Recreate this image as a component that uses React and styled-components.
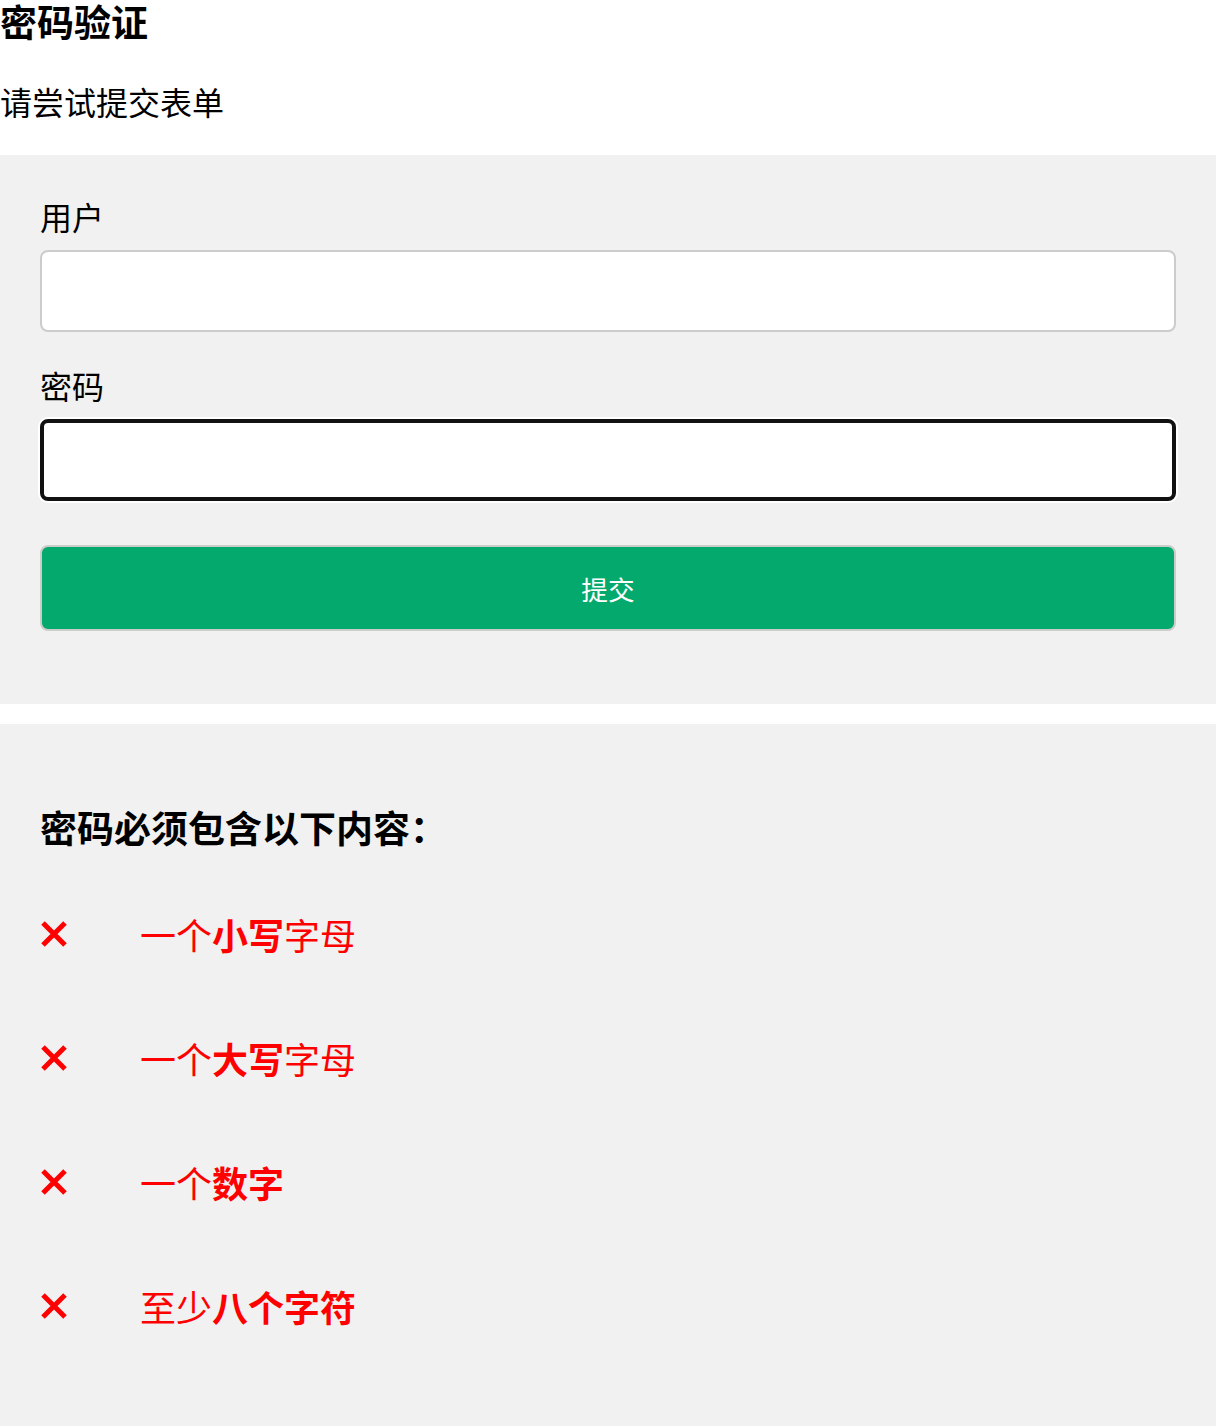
import styled, { createGlobalStyle } from "styled-components"

const GlobalStyle = createGlobalStyle`
    body {
        margin: 0;
        background: #fff;
        font-family: "Noto Sans CJK SC", "Noto Sans", sans-serif;
        color: #000;
    }
`

const Title = styled.h3`
    margin: 0;
    font-size: 37px;
    line-height: 42px;
    font-weight: 700;
`

const Intro = styled.p`
    margin: 36px 0 31px;
    font-size: 32px;
    line-height: 46px;
`

const Container = styled.div`
    background-color: #f1f1f1;
    padding: 40px;
`

const Label = styled.label`
    display: block;
    font-size: 32px;
    line-height: 43px;
`

const Input = styled.input`
    display: block;
    width: 100%;
    height: 82px;
    padding: 24px;
    border: 2px solid #ccc;
    border-radius: 8px;
    box-sizing: border-box;
    margin: 12px 0 32px;
    background: #fff;
    font-size: 32px;
    outline: none;
    ${p => p.$focused && `
        border: 4px solid #111;
        box-shadow: 0 0 0 2px #fff;
    `}
`

const Submit = styled.button`
    display: block;
    width: 100%;
    height: 86px;
    margin: 44px 0 33px;
    border: 2px solid #ccc;
    border-radius: 8px;
    background-color: #04AA6D;
    color: white;
    font-family: "Noto Sans CJK SC", sans-serif;
    font-size: 26.67px;
`

const Message = styled.div`
    background: #f1f1f1;
    margin-top: 20px;
    padding: 40px;
`

const MessageTitle = styled.h3`
    margin: 37px 0 0;
    font-size: 37px;
    line-height: 53px;
    font-weight: 700;
`

const Rule = styled.p`
    display: flex;
    align-items: center;
    margin: 36px 0;
    padding: 20px 0;
    font-size: 36px;
    line-height: 48px;
    color: ${p => (p.$valid ? "green" : "red")};

    b {
        font-weight: 700;
    }
`

const Mark = styled.span`
    display: flex;
    align-items: center;
    width: 100px;
    flex-shrink: 0;
`

const Cross = () => (
    <svg width="28" height="28" viewBox="0 0 28 28">
        <path d="M3 3 L25 25 M25 3 L3 25" stroke="#ff0000" strokeWidth="5" />
    </svg>
)

const rules = [
    [["一个", false], ["小写", true], ["字母", false]],
    [["一个", false], ["大写", true], ["字母", false]],
    [["一个", false], ["数字", true]],
    [["至少", false], ["八个字符", true]],
]

const App = () => {
    return (
        <>
            <GlobalStyle />
            <Title>密码验证</Title>
            <Intro>请尝试提交表单</Intro>
            <Container>
                <form onSubmit={e => e.preventDefault()}>
                    <Label htmlFor="usrname">用户</Label>
                    <Input type="text" id="usrname" name="usrname" />
                    <Label htmlFor="psw">密码</Label>
                    <Input type="password" id="psw" name="psw" $focused />
                    <Submit type="submit">提交</Submit>
                </form>
            </Container>
            <Message>
                <MessageTitle>密码必须包含以下内容：</MessageTitle>
                {rules.map((parts, i) => (
                    <Rule key={i}>
                        <Mark><Cross /></Mark>
                        <span>
                            {parts.map(([text, bold], j) =>
                                bold ? <b key={j}>{text}</b> : <span key={j}>{text}</span>
                            )}
                        </span>
                    </Rule>
                ))}
            </Message>
        </>
    )
}

export default App
